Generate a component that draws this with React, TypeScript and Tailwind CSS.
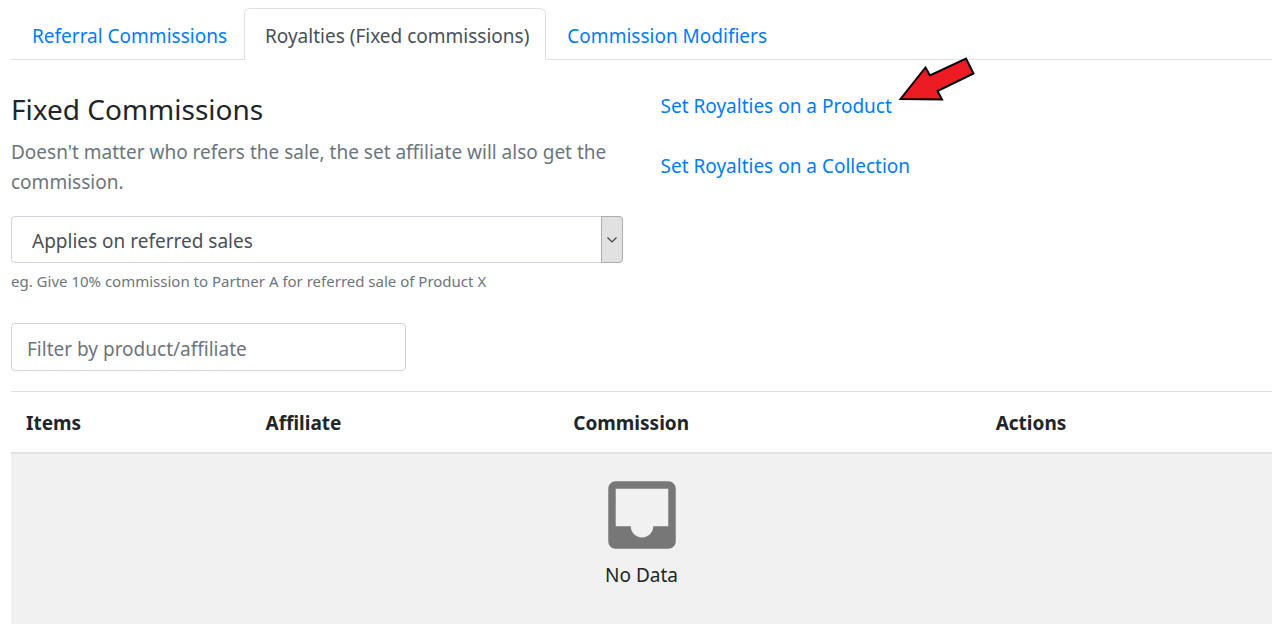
const tabs = ["Referral Commissions", "Royalties (Fixed commissions)", "Commission Modifiers"];
const activeTab = tabs[1];

function InboxIcon() {
  return (
    <svg width="90" height="90" viewBox="0 0 24 24" fill="#777777" aria-hidden="true" className="mx-auto block">
      <path d="M19 3H4.990C3.880 3 3.010 3.890 3.010 5L3 19c0 1.100.880 2 1.990 2H19c1.100 0 2-.9 2-2V5c0-1.110-.9-2-2-2zm0 12h-4c0 1.660-1.350 3-3 3s-3-1.340-3-3H4.990V5H19v10z" />
    </svg>
  );
}

function PointerArrow() {
  return (
    <svg
      width="82"
      height="52"
      viewBox="0 0 82 52"
      aria-hidden="true"
      className="pointer-events-none absolute bottom-4 left-full ml-1"
    >
      <path
        d="M4.500 46 29.500 14.500 34 22.500 70 5.500 77.500 20.500 41.500 38 46 46.500Z"
        fill="#ed1c24"
        stroke="#000000"
        strokeWidth="2"
      />
    </svg>
  );
}

export default function App() {
  return (
    <main className="bg-white pt-2 pr-2 pb-2 pl-[11px] font-['Noto_Sans',sans-serif] text-[19px] leading-[30px] text-[#212529]">
      <nav className="flex border-b border-[#dee2e6]">
        {tabs.map((tab) => (
          <a
            key={tab}
            href="#"
            aria-current={tab === activeTab ? "page" : undefined}
            className={
              tab === activeTab
                ? "-mb-px rounded-t-md border border-[#dee2e6] border-b-white bg-white pt-3 pr-4 pb-2 pl-5 text-[#495057]"
                : "-mb-px border border-transparent pt-3 pr-4 pb-2 pl-5 text-[#007bff]"
            }
          >
            {tab}
          </a>
        ))}
      </nav>
      <div className="mt-[31px] grid grid-cols-2 gap-[38px]">
        <section>
          <h1 className="text-[28px] leading-9">Fixed Commissions</h1>
          <p className="mt-[10px] text-[#6c757d]">
            Doesn't matter who refers the sale, the set affiliate will also get the commission.
          </p>
          <div className="relative mt-[19px]">
            <select
              aria-label="Applies on"
              className="block h-[47px] w-full appearance-none rounded border border-[#ced4da] bg-white pt-[2px] pl-5 text-[#495057]"
            >
              <option>Applies on referred sales</option>
            </select>
            <span className="pointer-events-none absolute inset-y-0 right-0 flex w-[22px] items-center justify-center rounded-r border border-[#adadad] bg-[#e1e1e1]">
              <svg width="10" height="6" viewBox="0 0 10 6" fill="none" stroke="#404040" strokeWidth="1.2">
                <path d="M.5.5 5 5 9.500.5" />
              </svg>
            </span>
          </div>
          <p className="mt-1 text-[15px] leading-7 text-[#6c757d]">
            eg. Give 10% commission to Partner A for referred sale of Product X
          </p>
        </section>
        <section className="flex flex-col items-start gap-[30px]">
          <a href="#" className="relative text-[#007bff]">
            Set Royalties on a Product
            <PointerArrow />
          </a>
          <a href="#" className="text-[#007bff]">
            Set Royalties on a Collection
          </a>
        </section>
      </div>
      <input
        type="text"
        aria-label="Filter by product/affiliate"
        placeholder="Filter by product/affiliate"
        className="mt-7 block h-12 w-[395px] max-w-full rounded border border-[#ced4da] px-[15px] pt-[3px] placeholder:text-[#6c757d]"
      />
      <table className="mt-5 w-full table-fixed">
        <thead>
          <tr className="border-t border-b-2 border-[#dee2e6] text-left">
            <th className="w-[19%] px-[15px] pt-4 pb-[14px]">Items</th>
            <th className="w-[24.4%] px-[15px] pt-4 pb-[14px]">Affiliate</th>
            <th className="w-[33.5%] px-[15px] pt-4 pb-[14px]">Commission</th>
            <th className="px-[15px] pt-4 pb-[14px]">Actions</th>
          </tr>
        </thead>
        <tbody>
          <tr className="bg-[#f1f1f1]">
            <td colSpan={4} className="px-4 pt-4 pb-[34px] text-center">
              <InboxIcon />
              <p>No Data</p>
            </td>
          </tr>
        </tbody>
      </table>
    </main>
  );
}
